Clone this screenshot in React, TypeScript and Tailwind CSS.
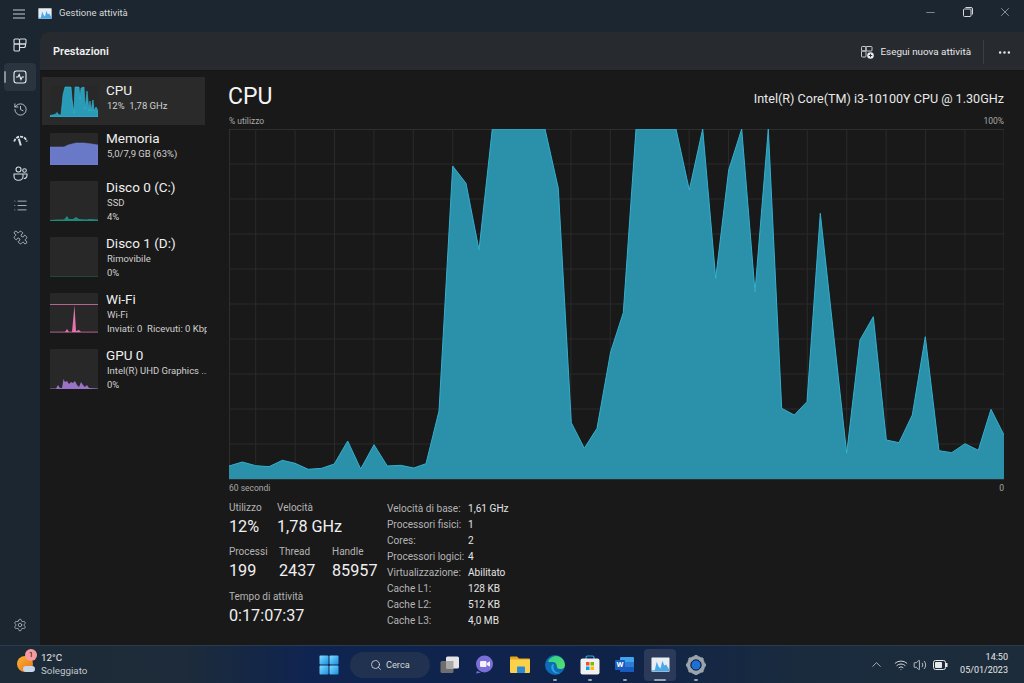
import React from 'react';
import { ChevronUp, History, List, Minus, MoreHorizontal, Puzzle, Search, Settings, Volume2, Wifi, X } from 'lucide-react';

const chartPoints =
  '229,466 242.3,462 255.7,465.7 269,466.7 282.3,460.3 295,463.3 308.3,469.3 321.7,468.3 334.3,464 347.7,441 360.7,469 374,444.7 387.3,466 400.7,465.3 413.7,468 426,463.7 439,411 452.7,166 466,183.3 479,250 492.3,129 545,129 558.3,188.3 571.3,422.7 584.3,448.3 597,428.3 610.7,351.7 623.3,312.7 636,129 676,129 689.3,190 702.7,129 715.7,278.3 728.7,170 741.7,129 755,291.7 768.3,129 781.7,408.3 794.3,415 807,401.7 820.3,213.3 846.7,453.3 860,340 873.3,316.7 886.3,440 899,442.7 912.3,415 925.3,336.7 939,450.7 951.7,452.7 965,443.7 978.3,450.3 991,409.3 1004,435';

function shifted(points: string) {
  return points
    .split(' ')
    .map((p) => {
      const [x, y] = p.split(',').map(Number);
      return `${x - 229},${y - 129}`;
    })
    .join(' ');
}

const verticals = Array.from({ length: 19 }, (_, i) => 26.7 + i * 39.4);
const horizontals = Array.from({ length: 9 }, (_, i) => 35 + i * 35);

function Thumb({ kind }: { kind: 'cpu' | 'mem' | 'disk0' | 'disk1' | 'wifi' | 'gpu' }) {
  const h = kind === 'cpu' || kind === 'mem' ? 32 : 40;
  return (
    <svg width="48" height={h} viewBox={`0 0 48 ${h}`} className="shrink-0 bg-[#282828]">
      {kind === 'cpu' && (
        <polygon
          fill="#2a9bb6"
          stroke="#35bcdc"
          strokeWidth="0.6"
          points="0,32 0,30.500 5,29.500 7,27.500 9,30 11,30 13,10 15,2 21,2 22,14 24,28 25,2 29,2 30,14 31,3 34,2 35,24 36,16 37,6 38,16 39,26 40,16 41,26 43,15 44,26 46,22 48,26 48,32"
        />
      )}
      {kind === 'mem' && <polygon fill="#6a78c8" stroke="#7685d8" strokeWidth="0.5" points="0,14 14,14 18,12 26,10 34,10 42,11 48,12 48,32 0,32" />}
      {kind === 'disk0' && (
        <polygon fill="#1f8a7c" points="0,39 8,38.5 14,38.5 17,35 19,38 23,38 26,36 29,38 36,38.5 40,38 48,38.5 48,40 0,40" />
      )}
      {kind === 'disk1' && <rect x="0" y="39.4" width="48" height="0.6" fill="#1f5a52" />}
      {kind === 'wifi' && (
        <>
          <rect x="0" y="11" width="48" height="1" fill="#b5658e" />
          <rect x="0" y="38.6" width="48" height="1" fill="#a85c85" />
          <polygon fill="#e673ad" points="15,39 17,36 19,39 22,39 24.5,12 26,38 29,37 31,39" />
        </>
      )}
      {kind === 'gpu' && (
        <polygon
          fill="#9a72c8"
          points="0,39.5 6,39.5 8,36 10,39 12,39 13.5,30 15,33 17,32 19,35 21,33 23,34 25,32 27,36 29,38 31,33 33,36 35,38 37,36 39,39 48,39.5 48,40 0,40"
        />
      )}
    </svg>
  );
}

function NavItem({
  thumb,
  title,
  lines,
  active,
}: {
  thumb: 'cpu' | 'mem' | 'disk0' | 'disk1' | 'wifi' | 'gpu';
  title: string;
  lines: string[];
  active?: boolean;
}) {
  const compact = lines.length === 1;
  return (
    <div className={`flex items-center gap-2 pl-2 ${compact ? 'h-12' : 'h-14'} ${active ? 'bg-[#2a2a2a]' : ''}`}>
      <Thumb kind={thumb} />
      <div className={`w-[101px] shrink-0 overflow-hidden whitespace-pre ${compact ? 'mb-[7px]' : ''}`}>
        <div className="text-[13.5px] leading-[17px] text-[#f0f0f0]">{title}</div>
        {lines.map((l) => (
          <div key={l} className="pl-px text-[9.5px] leading-[14px] text-[#d0d0d0]">
            {l}
          </div>
        ))}
      </div>
    </div>
  );
}

function RailButton({ children, active }: { children: React.ReactNode; active?: boolean }) {
  return (
    <div className={`relative flex h-[28px] w-8 items-center justify-center rounded-[4px] ${active ? 'bg-[#2a343e]' : ''}`}>
      {active && <div className="absolute left-0 top-[8px] h-3 w-[2px] rounded bg-[#8a8f94]" />}
      {children}
    </div>
  );
}

function Stat({ label, value, className }: { label: string; value: string; className?: string }) {
  return (
    <div className={className}>
      <div className="text-[10px] leading-[14px] text-[#b4b4b4]">{label}</div>
      <div className="text-[16.2px] leading-[24px] text-[#f0f0f0]">{value}</div>
    </div>
  );
}

const specs = [
  ['Velocità di base:', '1,61 GHz'],
  ['Processori fisici:', '1'],
  ['Cores:', '2'],
  ['Processori logici:', '4'],
  ['Virtualizzazione:', 'Abilitato'],
  ['Cache L1:', '128 KB'],
  ['Cache L2:', '512 KB'],
  ['Cache L3:', '4,0 MB'],
];

function TaskIcon({ children, dot, active, w = 'w-[35px]' }: { children: React.ReactNode; dot?: boolean; active?: boolean; w?: string }) {
  return (
    <div className={`relative flex h-[32px] shrink-0 items-center justify-center rounded ${w} ${active ? 'bg-[#2a3a58]' : ''}`}>
      {children}
      {dot && <div className={`absolute bottom-0 h-[2px] rounded bg-[#9aa3ad] ${active ? 'w-3' : 'w-1'}`} />}
    </div>
  );
}

function TmLogo({ size }: { size: number }) {
  return (
    <svg width={size} height={(size * 16) / 20} viewBox="0 0 20 16">
      <rect x="0.5" y="0.5" width="19" height="15" fill="#e8eef4" rx="0.5" />
      <polygon points="1,14 4,14 6,5 8,10 10,12 12,4 14,9 16,8 19,13 19,15 1,15" fill="#4ba8e8" />
    </svg>
  );
}

export default function App() {
  return (
    <div
      className="flex h-[683px] w-[1024px] flex-col overflow-hidden bg-[#1b2631] text-white"
      style={{ fontFamily: 'Roboto, "Open Sans", sans-serif' }}
    >
      {/* barra del titolo */}
      <div className="flex h-[32px] shrink-0 items-center pb-[5px]">
        <svg width="14" height="12" viewBox="0 0 14 12" className="ml-[12px]" stroke="#c8ccd0" strokeWidth="1">
          <path d="M1 2h12M1 6h12M1 10h12" />
        </svg>
        <div className="ml-[12px]">
          <TmLogo size={14} />
        </div>
        <span className="ml-[7px] text-[9.5px] text-[#d8d8d8]">Gestione attività</span>
        <div className="-mt-[3px] ml-auto flex items-center pr-[1px]">
          <div className="flex w-[37px] justify-center">
            <Minus size={13} strokeWidth={1} color="#d8d8d8" />
          </div>
          <div className="flex w-[37px] justify-center">
            <svg width="10" height="10" viewBox="0 0 10 10" fill="none" stroke="#d8d8d8" strokeWidth="1">
              <rect x="0.5" y="2" width="7.5" height="7.5" rx="1" />
              <path d="M2.5 0.5h5.5a1.5 1.5 0 0 1 1.5 1.5v5.5" />
            </svg>
          </div>
          <div className="flex w-[37px] justify-center">
            <X size={14} strokeWidth={1} color="#d8d8d8" />
          </div>
        </div>
      </div>

      <div className="flex min-h-0 flex-1">
        {/* barra laterale */}
        <div className="-mt-px flex w-[40px] shrink-0 flex-col items-center gap-[4px] pb-[6px]">
          <RailButton>
            <svg width="14" height="14" viewBox="0 0 14 14" fill="none" stroke="#d8dce0" strokeWidth="1.1">
              <rect x="1" y="1" width="5.5" height="5" rx="1" />
              <rect x="6.5" y="1" width="6.5" height="5" rx="1" />
              <rect x="1" y="6" width="5.5" height="7" rx="1" />
              <path d="M6.5 6h6v1.5a2 2 0 0 1-2 2h-4z" />
            </svg>
          </RailButton>
          <RailButton active>
            <svg width="14" height="14" viewBox="0 0 14 14" fill="none" stroke="#e8ecf0" strokeWidth="1.1">
              <rect x="1" y="1" width="12" height="12" rx="2.5" />
              <path d="M3 7h2l1.2-2.5L8 9.5 9.2 7H11" />
            </svg>
          </RailButton>
          <RailButton>
            <History size={15} strokeWidth={1.3} color="#d8dce0" />
          </RailButton>
          <RailButton>
            <svg width="15" height="12" viewBox="0 0 15 12" fill="none" stroke="#d8dce0" strokeWidth="1.8">
              <path d="M1.2 6.500a6.500 6.500 0 0 1 12.600 0" strokeDasharray="3 1" />
              <path d="M5.800 3.800L7.800 10.500" strokeWidth="2" />
            </svg>
          </RailButton>
          <RailButton>
            <svg width="15" height="15" viewBox="0 0 15 15" fill="none" stroke="#d8dce0" strokeWidth="1.1">
              <circle cx="5.500" cy="3.500" r="2.500" />
              <circle cx="11.500" cy="4.500" r="1.800" />
              <path d="M1 8h9v2.200a4 4 0 0 1-4 4H5a4 4 0 0 1-4-4z" />
              <path d="M10.500 8h3.500v1.500a3 3 0 0 1-3.300 3" />
            </svg>
          </RailButton>
          <RailButton>
            <List size={15} strokeWidth={1.2} color="#d8dce0" />
          </RailButton>
          <RailButton>
            <Puzzle size={15} strokeWidth={1.2} color="#d8dce0" className="-scale-x-100" />
          </RailButton>
          <div className="mt-auto">
            <RailButton>
              <Settings size={14} strokeWidth={1.2} color="#c8ccd0" />
            </RailButton>
          </div>
        </div>

        {/* pannello */}
        <div className="flex min-w-0 flex-1 flex-col overflow-hidden rounded-tl-lg bg-[#191919]">
          <div className="flex h-[39px] shrink-0 items-center border-b border-[#141414] bg-[#272b2f] pt-[2px]">
            <span className="ml-[13px] mt-[1px] text-[11px] font-semibold text-[#f0f0f0]">Prestazioni</span>
            <div className="ml-auto flex items-center">
              <svg width="13" height="13" viewBox="0 0 13 13" fill="none" stroke="#d8dce0" strokeWidth="0.9">
                <rect x="0.5" y="0.5" width="4.5" height="4.5" rx="0.8" />
                <rect x="5" y="0.5" width="6" height="4.5" rx="0.8" />
                <rect x="0.5" y="5" width="4.5" height="6" rx="0.8" />
                <circle cx="9.5" cy="9.5" r="3.3" fill="#e8ecf0" stroke="none" />
                <path d="M9.5 7.8v3.4M7.8 9.5h3.4" stroke="#22272b" />
              </svg>
              <span className="ml-[6px] text-[9.85px] text-[#e8e8e8]">Esegui nuova attività</span>
              <div className="ml-[12px] h-[24px] w-px bg-[#3a3f43]" />
              <div className="flex w-[40px] justify-center">
                <MoreHorizontal size={15} strokeWidth={2} color="#e8e8e8" />
              </div>
            </div>
          </div>

          <div className="flex min-h-0 flex-1">
            <div className="ml-[2px] w-[163px] shrink-0 pt-[6px]">
              <NavItem thumb="cpu" title="CPU" lines={['12%  1,78 GHz']} active />
              <NavItem thumb="mem" title="Memoria" lines={['5,0/7,9 GB (63%)']} />
              <NavItem thumb="disk0" title="Disco 0 (C:)" lines={['SSD', '4%']} />
              <NavItem thumb="disk1" title="Disco 1 (D:)" lines={['Rimovibile', '0%']} />
              <NavItem thumb="wifi" title="Wi-Fi" lines={['Wi-Fi', 'Inviati: 0  Ricevuti: 0 Kbps']} />
              <NavItem thumb="gpu" title="GPU 0" lines={['Intel(R) UHD Graphics ...', '0%']} />
            </div>

            <div className="ml-[24px] w-[775px] shrink-0">
              <div className="flex h-[42px] items-end justify-between pb-[1px]">
                <span className="-ml-px text-[23px] leading-[30px] text-[#f4f4f4]">CPU</span>
                <span className="mb-[3px] text-[12.6px] text-[#e8e8e8]">Intel(R) Core(TM) i3-10100Y CPU @ 1.30GHz</span>
              </div>
              <div className="flex h-[16px] items-center justify-between text-[8.5px] text-[#a8a8a8]">
                <span>% utilizzo</span>
                <span>100%</span>
              </div>
              <svg width="775" height="351" viewBox="0 0 775 351" className="block">
                <rect x="0.5" y="0.5" width="774.5" height="350" fill="#191919" stroke="#2e2e2e" />
                {horizontals.map((y) => (
                  <line key={y} x1="0" x2="775" y1={y} y2={y} stroke="#2a2a2a" />
                ))}
                {verticals.map((x) => (
                  <line key={x} x1={x} x2={x} y1="0" y2="350" stroke="#2a2a2a" />
                ))}
                <polygon points={`0,350 ${shifted(chartPoints)} 775,350`} fill="#2b90aa" />
                <polyline points={shifted(chartPoints)} fill="none" stroke="#33b0cf" strokeWidth="1" />
              </svg>
              <div className="flex h-[16px] items-center justify-between text-[8.5px] text-[#a8a8a8]">
                <span>60 secondi</span>
                <span>0</span>
              </div>

              <div className="mt-[5px] flex">
                <div className="w-[158px] shrink-0">
                  <div className="flex">
                    <Stat label="Utilizzo" value="12%" className="w-[48px]" />
                    <Stat label="Velocità" value="1,78 GHz" />
                  </div>
                  <div className="mt-[6px] flex">
                    <Stat label="Processi" value="199" className="w-[50px]" />
                    <Stat label="Thread" value="2437" className="w-[53px]" />
                    <Stat label="Handle" value="85957" />
                  </div>
                  <Stat label="Tempo di attività" value="0:17:07:37" className="mt-[7px]" />
                </div>
                <div className="grid grid-cols-[81px_auto] auto-rows-[16px] items-center text-[10.1px] leading-[16px]">
                  {specs.map(([k, v]) => (
                    <React.Fragment key={k}>
                      <span className="whitespace-nowrap text-[#b4b4b4]">{k}</span>
                      <span className="text-[#e4e4e4]">{v}</span>
                    </React.Fragment>
                  ))}
                </div>
              </div>
            </div>
          </div>
        </div>
      </div>

      {/* barra delle applicazioni */}
      <div className="flex h-[38px] shrink-0 items-center border-t border-[#2c3a4c] bg-[linear-gradient(90deg,#1d2b38_0%,#1d2b3a_18%,#0f2450_30%,#0f2349_60%,#1a2b3e_78%,#1c2c3a_100%)]">
        <div className="flex w-[311px] shrink-0 items-center pl-[17px]">
          <div className="relative h-[18px] w-[18px]">
            <div className="h-[16px] w-[16px] rounded-full bg-[linear-gradient(135deg,#f9b234,#e8731a)]" />
            <div className="absolute bottom-[2px] right-0 h-[6px] w-[12px] rounded-full bg-[#c6d6ec]" />
            <div className="absolute -right-[2px] -top-[7px] flex h-[12px] w-[12px] items-center justify-center rounded-full bg-[#f79aa0] text-[8px] leading-none text-[#301015]">
              1
            </div>
          </div>
          <div className="ml-[6px] -mt-px text-[9.8px] leading-[13px]">
            <div className="text-[#e8e8e8]">12°C</div>
            <div className="text-[#c0c6cc]">Soleggiato</div>
          </div>
        </div>

        <TaskIcon w="w-[36px]">
          <svg width="20" height="20" viewBox="0 0 20 20">
            <defs>
              <linearGradient id="win" x1="0" y1="0" x2="1" y2="1">
                <stop offset="0" stopColor="#7fdcff" />
                <stop offset="1" stopColor="#1a8fe3" />
              </linearGradient>
            </defs>
            <rect x="0.5" y="0.5" width="9" height="9" rx="1" fill="url(#win)" />
            <rect x="10.5" y="0.5" width="9" height="9" rx="1" fill="url(#win)" />
            <rect x="0.5" y="10.5" width="9" height="9" rx="1" fill="url(#win)" />
            <rect x="10.5" y="10.5" width="9" height="9" rx="1" fill="url(#win)" />
          </svg>
        </TaskIcon>
        <div className="ml-[3px] flex h-[26px] w-[80px] shrink-0 items-center rounded-full bg-[#213250] pl-[20px]">
          <Search size={12} strokeWidth={1.5} color="#e8e8e8" />
          <span className="ml-[4px] text-[9.2px] text-[#d8d8d8]">Cerca</span>
        </div>
        <div className="ml-[2px] flex items-center">
          <TaskIcon>
            <svg width="20" height="18" viewBox="0 0 20 18">
              <rect x="0.5" y="5" width="13" height="12" rx="1.5" fill="#6e6e6e" />
              <rect x="6" y="0.5" width="13" height="12" rx="1.5" fill="#e4e4e4" />
              <rect x="6" y="5" width="7.5" height="7.5" fill="#a8a8a8" />
            </svg>
          </TaskIcon>
          <TaskIcon>
            <svg width="19" height="19" viewBox="0 0 19 19">
              <circle cx="9.5" cy="9" r="8.5" fill="#7a6fd8" />
              <path d="M2 16l-1 2.5 5-1z" fill="#7a6fd8" />
              <rect x="5" y="6" width="6.5" height="6" rx="1.2" fill="#f4f0ff" />
              <path d="M12 8l3-1.8v5.6L12 10z" fill="#f4f0ff" />
            </svg>
          </TaskIcon>
          <TaskIcon>
            <svg width="20" height="17" viewBox="0 0 20 17">
              <path d="M0 1.5A1 1 0 0 1 1 .5h6l2 2h10a1 1 0 0 1 1 1v2H0z" fill="#e8a818" />
              <rect x="0" y="3.5" width="20" height="13.5" rx="1" fill="#fbd04a" />
              <rect x="7" y="10.5" width="8" height="6.5" rx="0.8" fill="#2a8ad8" />
            </svg>
          </TaskIcon>
          <TaskIcon dot>
            <svg width="20" height="20" viewBox="0 0 20 20">
              <defs>
                <linearGradient id="edge" x1="0" y1="0" x2="1" y2="1">
                  <stop offset="0" stopColor="#2fd08a" />
                  <stop offset="1" stopColor="#58e06a" />
                </linearGradient>
              </defs>
              <circle cx="10" cy="10" r="10" fill="#0f6bb8" />
              <path d="M3 6a9 9 0 0 1 17 4c0 2.5-2 4-4.5 4s-3.5-1-3.5-2c0-2-1-5-4-5-2 0-4 .5-5-1z" fill="url(#edge)" />
              <path d="M9 9c-2.5 0-3.5 3-2 6s5 4.500 8 3c-4 0-8-3-6-9z" fill="#27a6e0" />
            </svg>
          </TaskIcon>
          <TaskIcon dot>
            <svg width="20" height="20" viewBox="0 0 20 20">
              <path d="M6 4V2.500A1.500 1.500 0 0 1 7.500 1h5A1.500 1.500 0 0 1 14 2.500V4" fill="none" stroke="#38a4e0" strokeWidth="1.2" />
              <rect x="0.5" y="3.500" width="19" height="16" rx="2" fill="#f0f0f0" />
              <rect x="6" y="7" width="3.500" height="3.500" fill="#f25022" />
              <rect x="10.500" y="7" width="3.500" height="3.500" fill="#7fba00" />
              <rect x="6" y="11.500" width="3.500" height="3.500" fill="#00a4ef" />
              <rect x="10.500" y="11.500" width="3.500" height="3.500" fill="#ffb900" />
            </svg>
          </TaskIcon>
          <TaskIcon dot>
            <div className="relative h-[16px] w-[19px]">
              <div className="ml-[5px] flex h-[16px] w-[14px] flex-col overflow-hidden rounded-[1px]">
                <div className="flex-1 bg-[#41a5ee]" />
                <div className="flex-1 bg-[#2b7cd3]" />
                <div className="flex-1 bg-[#185abd]" />
              </div>
              <div className="absolute left-0 top-[3px] flex h-[10px] w-[10px] items-center justify-center rounded-[1px] bg-[#1a5cc0] text-[8px] font-bold leading-none text-white">
                W
              </div>
            </div>
          </TaskIcon>
          <TaskIcon active dot w="w-[32px] mx-[2px]">
            <TmLogo size={19} />
          </TaskIcon>
          <TaskIcon dot>
            <svg width="20" height="20" viewBox="0 0 20 20">
              <circle cx="10" cy="10" r="7.500" fill="none" stroke="#9aa4ac" strokeWidth="3.500" />
              <path d="M10 0v4M10 16v4M0 10h4M16 10h4M3 3l3 3M14 14l3 3M17 3l-3 3M6 14l-3 3" stroke="#9aa4ac" strokeWidth="3" />
              <circle cx="10" cy="10" r="4.500" fill="#1f6fd8" />
            </svg>
          </TaskIcon>
        </div>

        <div className="ml-auto flex items-center pr-[16px]">
          <ChevronUp size={15} strokeWidth={1.2} color="#d8d8d8" />
          <Wifi size={14} strokeWidth={1.5} color="#e8e8e8" className="ml-[10px]" />
          <Volume2 size={14} strokeWidth={1.3} color="#e8e8e8" className="ml-[5px]" />
          <svg width="15" height="10" viewBox="0 0 15 10" className="ml-[6px]">
            <rect x="0.500" y="0.500" width="12" height="9" rx="2" fill="none" stroke="#e8e8e8" />
            <rect x="2" y="2" width="7" height="6" rx="0.800" fill="#e8e8e8" />
            <rect x="13" y="3" width="1.500" height="4" fill="#e8e8e8" />
          </svg>
          <div className="ml-[12px] -mt-px text-right text-[9px] leading-[13px] text-[#e8e8e8]">
            <div>14:50</div>
            <div>05/01/2023</div>
          </div>
        </div>
      </div>
    </div>
  );
}
